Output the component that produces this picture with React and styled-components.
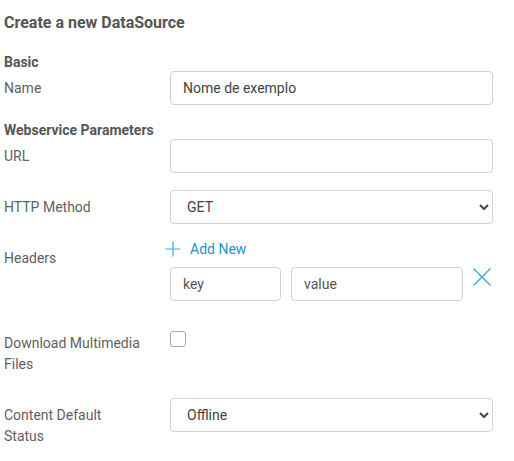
import styled, { createGlobalStyle } from "styled-components";

const GlobalStyle = createGlobalStyle`
  body {
    margin: 0;
    background: #fff;
    font-family: Roboto, "Liberation Sans", sans-serif;
  }
`;

const Page = styled.div`
  padding: 13px 21px 0 4px;
  color: #5c5c5c;
  font-size: 14px;
`;

const Title = styled.h2`
  margin: 0;
  font-size: 16px;
  line-height: 20px;
  font-weight: 700;
  color: #555;
`;

const Section = styled.h3`
  margin: ${(p) => p.$top}px 0 0;
  font-size: 14px;
  line-height: 18px;
  font-weight: 700;
  color: #555;
`;

const Row = styled.div`
  display: grid;
  grid-template-columns: 166px 323px;
  margin-top: ${(p) => p.$top || 0}px;
`;

const Label = styled.label`
  padding-top: ${(p) => p.$pad ?? 7}px;
  padding-right: 27px;
  line-height: 21px;
  color: #5f5f5f;
`;

const Field = styled.div`
  display: flex;
  flex-direction: column;
`;

const TextInput = styled.input`
  box-sizing: border-box;
  width: ${(p) => p.$w || "100%"};
  height: 34px;
  border: 1px solid #d2d2d2;
  border-radius: 4px;
  padding: 0 12px;
  font-family: Roboto, "Liberation Sans", sans-serif;
  font-size: 14px;
  color: #444;
  outline: none;
  &::placeholder {
    color: #555;
  }
`;

const Select = styled.select`
  box-sizing: border-box;
  width: 100%;
  height: 34px;
  border: 1px solid #d2d2d2;
  border-radius: 4px;
  padding: 0 12px;
  background: #fff;
  font-family: Roboto, "Liberation Sans", sans-serif;
  font-size: 14px;
  color: #444;
`;

const AddNew = styled.button`
  display: flex;
  align-items: center;
  gap: 9px;
  height: 16px;
  margin: 0 0 10px -5px;
  padding: 0;
  border: none;
  background: none;
  color: #1b95cc;
  font-family: Roboto, "Liberation Sans", sans-serif;
  font-size: 14px;
  cursor: pointer;
`;

const Pair = styled.div`
  display: flex;
  align-items: flex-start;
  gap: 10px;
`;

const RemoveBtn = styled.button`
  margin-top: 1px;
  padding: 0;
  border: none;
  background: none;
  line-height: 0;
  cursor: pointer;
`;

const Check = styled.input`
  appearance: none;
  box-sizing: border-box;
  width: 16px;
  height: 16px;
  margin: 5px 0 0;
  border: 1px solid #a9a9a9;
  border-radius: 3px;
  background: #fff;
`;

function App() {
  return (
    <Page>
      <GlobalStyle />
      <Title>Create a new DataSource</Title>

      <Section $top={20}>Basic</Section>
      <Row>
        <Label>Name</Label>
        <TextInput defaultValue="Nome de exemplo" />
      </Row>

      <Section $top={16}>Webservice Parameters</Section>
      <Row>
        <Label>URL</Label>
        <TextInput />
      </Row>

      <Row $top={17}>
        <Label>HTTP Method</Label>
        <Select defaultValue="GET">
          <option>GET</option>
          <option>POST</option>
          <option>PUT</option>
          <option>DELETE</option>
        </Select>
      </Row>

      <Row $top={17}>
        <Label>Headers</Label>
        <Field>
          <AddNew>
            <svg width="16" height="16" viewBox="0 0 16 16">
              <path d="M8 0.5v15M0.5 8h15" stroke="#36a9dc" strokeWidth="1.2" />
            </svg>
            Add New
          </AddNew>
          <Pair>
            <TextInput $w="111px" placeholder="key" />
            <TextInput $w="172px" placeholder="value" />
            <RemoveBtn>
              <svg width="18" height="18" viewBox="0 0 18 18">
                <path d="M0.5 0.5L17.5 17.5M17.5 0.5L0.5 17.5" stroke="#2ea6db" strokeWidth="1.2" />
              </svg>
            </RemoveBtn>
          </Pair>
        </Field>
      </Row>

      <Row $top={25}>
        <Label>Download Multimedia Files</Label>
        <div>
          <Check type="checkbox" />
        </div>
      </Row>

      <Row $top={23}>
        <Label>Content Default Status</Label>
        <Select defaultValue="Offline">
          <option>Offline</option>
          <option>Online</option>
        </Select>
      </Row>
    </Page>
  );
}

export default App;
